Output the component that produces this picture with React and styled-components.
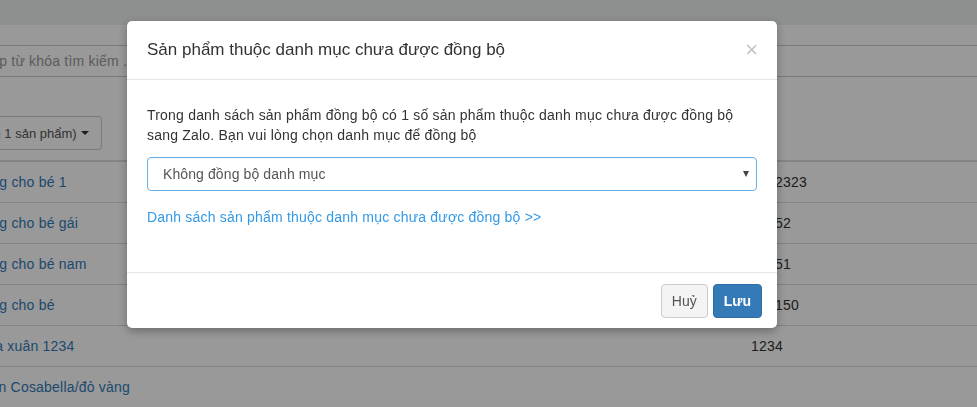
import React from "react";
import styled, { createGlobalStyle } from "styled-components";

const GlobalStyle = createGlobalStyle`
  html, body {
    margin: 0;
    padding: 0;
    background: #fff;
    overflow: hidden;
  }
  body {
    font-family: "Liberation Sans", Arial, Helvetica, sans-serif;
    font-size: 14px;
    line-height: 20px;
    color: #333;
  }
  * {
    box-sizing: border-box;
  }
`;

const rows = [
  { name: "Đồ dùng cho bé 1", value: "1232323" },
  { name: "Đồ dùng cho bé gái", value: "12352" },
  { name: "Đồ dùng cho bé nam", value: "12351" },
  { name: "Đồ dùng cho bé", value: "123150" },
  { name: "Đồ mùa xuân 1234", value: "1234" },
  { name: "Đầm len Cosabella/đỏ vàng", value: "" },
];

export default function App() {
  return (
    <>
      <GlobalStyle />
      <Trang>
        <ThanhTren />
        <NoiDung>
          <OTimKiem placeholder="Nhập từ khóa tìm kiếm ..." />
          <NutThaoTac>
            (Đã chọn 1 sản phẩm) <Caret />
          </NutThaoTac>
          <Bang>
            <tbody>
              {rows.map((r) => (
                <tr key={r.name}>
                  <O>
                    <LienKet>{r.name}</LienKet>
                  </O>
                  <O>{r.value}</O>
                </tr>
              ))}
            </tbody>
          </Bang>
        </NoiDung>
      </Trang>

      <LopPhu />

      <HopThoai>
        <DauHop>
          <TieuDe>Sản phẩm thuộc danh mục chưa được đồng bộ</TieuDe>
          <NutDong>×</NutDong>
        </DauHop>
        <ThanHop>
          <MoTa>
            Trong danh sách sản phẩm đồng bộ có 1 số sản phẩm thuộc danh mục chưa
            được đồng bộ sang Zalo. Bạn vui lòng chọn danh mục để đồng bộ
          </MoTa>
          <HopChon>
            <span>Không đồng bộ danh mục</span>
            <MuiTen />
          </HopChon>
          <LinkDanhSach>
            Danh sách sản phẩm thuộc danh mục chưa được đồng bộ &gt;&gt;
          </LinkDanhSach>
        </ThanHop>
        <ChanHop>
          <Nut>Huỷ</Nut>
          <Nut chinh>Lưu</Nut>
        </ChanHop>
      </HopThoai>
    </>
  );
}

/* ---------- TRANG NEN ---------- */
const Trang = styled.div`
  min-height: 100vh;
  background: #fff;
`;

const ThanhTren = styled.div`
  height: 25px;
  background: #edf0f0;
`;

const NoiDung = styled.div`
  margin-left: -55px;
  width: 1100px;
  padding-top: 20px;
`;

const OTimKiem = styled.input`
  display: block;
  margin-left: 15px;
  width: 1070px;
  height: 32px;
  padding: 6px 12px;
  border: 1px solid #ccc;
  border-radius: 4px;
  font-family: inherit;
  font-size: 14px;
  letter-spacing: 0.2px;
  color: #555;
  &::placeholder {
    color: #999;
  }
`;

const NutThaoTac = styled.button`
  display: inline-flex;
  align-items: center;
  gap: 4px;
  margin-top: 39px;
  margin-left: -10px;
  height: 34px;
  padding: 6px 12px;
  border: 1px solid #ccc;
  border-radius: 4px;
  background: #fff;
  font-family: inherit;
  font-size: 13px;
  color: #555;
`;

const Caret = styled.span`
  display: inline-block;
  width: 0;
  height: 0;
  border-top: 4px solid #333;
  border-left: 4px solid transparent;
  border-right: 4px solid transparent;
`;

const Bang = styled.table`
  margin-top: 10px;
  width: 100%;
  border-collapse: collapse;
  border-top: 2px solid #ddd;
`;

const O = styled.td`
  padding: 10px 8px;
  line-height: 20px;
  border-bottom: 1px solid #ddd;
  color: #333;
  letter-spacing: 0.2px;
  &:first-child {
    width: 798px;
  }
`;

const LienKet = styled.a`
  color: #337ab7;
  text-decoration: none;
`;

/* ---------- HOP THOAI ---------- */
const LopPhu = styled.div`
  position: fixed;
  inset: 0;
  background: rgba(0, 0, 0, 0.4);
`;

const HopThoai = styled.div`
  position: fixed;
  top: 21px;
  left: 127px;
  width: 650px;
  background: #fff;
  border-radius: 5px;
  box-shadow: 0 3px 9px rgba(0, 0, 0, 0.3);
`;

const DauHop = styled.div`
  display: flex;
  align-items: center;
  justify-content: space-between;
  padding: 19px 20px 19px 20px;
  border-bottom: 1px solid #e5e5e5;
`;

const TieuDe = styled.h4`
  margin: 0;
  font-size: 17px;
  font-weight: normal;
  line-height: 20px;
  color: #333;
`;

const NutDong = styled.span`
  margin-right: -1px;
  font-size: 22px;
  line-height: 20px;
  color: #c4c4c4;
`;

const ThanHop = styled.div`
  padding: 25px 20px 45px 20px;
`;

const MoTa = styled.p`
  margin: 0 0 12px;
  line-height: 20px;
  letter-spacing: 0.2px;
  color: #333;
`;

const HopChon = styled.div`
  display: flex;
  align-items: center;
  justify-content: space-between;
  height: 34px;
  padding: 0 7px 0 15px;
  border: 1px solid #66afe9;
  border-radius: 4px;
  color: #555;
  letter-spacing: 0.1px;
  box-shadow: inset 0 1px 1px rgba(0, 0, 0, 0.04);
`;

const MuiTen = styled.span`
  width: 0;
  height: 0;
  border-top: 6px solid #444;
  border-left: 3px solid transparent;
  border-right: 3px solid transparent;
`;

const LinkDanhSach = styled.a`
  display: block;
  margin-top: 16px;
  line-height: 20px;
  letter-spacing: 0.2px;
  color: #3399e8;
  text-decoration: none;
`;

const ChanHop = styled.div`
  display: flex;
  justify-content: flex-end;
  gap: 5px;
  padding: 11px 15px 10px;
  border-top: 1px solid #e5e5e5;
`;

const Nut = styled.button`
  height: 34px;
  padding: 6px 10px;
  border: 1px solid ${(p) => (p.chinh ? "#2e6da4" : "#ccc")};
  border-radius: 4px;
  background: ${(p) => (p.chinh ? "#337ab7" : "#f4f4f4")};
  color: ${(p) => (p.chinh ? "#fff" : "#555")};
  font-family: inherit;
  font-size: 14px;
  font-weight: ${(p) => (p.chinh ? "bold" : "normal")};
`;
